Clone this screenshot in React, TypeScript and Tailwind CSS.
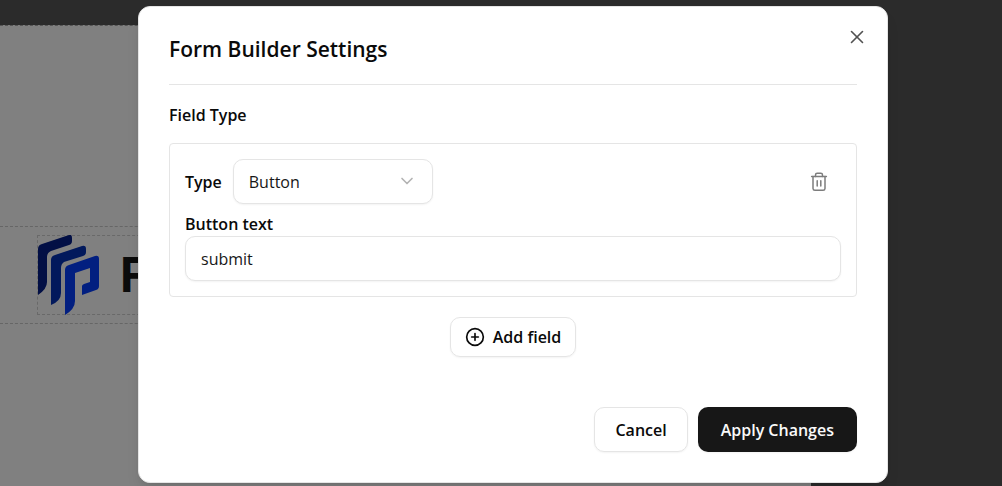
import { useState } from 'react';
import { ChevronDown, CirclePlus, X } from 'lucide-react';

function Logo() {
  return (
    <svg viewBox="0 0 62 82" className="mt-px h-[82px] w-[62px] shrink-0" aria-hidden="true">
      <path fill="#020f45" d="M0 14Q0 10 4 9L31 0Q34 -1 34 3V6Q34 9 31 10L13 16Q9 18 9 22V47Q9 54 0 60Z" />
      <path fill="#02195c" d="M13 25Q13 21 17 20L44 11Q48 10 48 14V17Q48 20 45 21L26 27Q23 29 23 33V58Q23 66 13 70Z" />
      <path fill="#021f80" d="M27 35Q27 31 31 30L57 21Q61 20 61 24V51Q61 54 58 55L44 60V51Q44 50 46 49L52 47V33L37 38V66Q37 74 27 80Z" />
    </svg>
  );
}

function TrashIcon() {
  return (
    <svg
      width="20"
      height="20"
      viewBox="0 0 20 20"
      fill="none"
      stroke="currentColor"
      strokeWidth="1.5"
      strokeLinecap="round"
      strokeLinejoin="round"
      aria-hidden="true"
    >
      <path d="M2.6 4.5h14.8" />
      <path d="M6.5 4.5V3a1.7 1.7 0 0 1 1.7-1.7h3.6A1.7 1.7 0 0 1 13.5 3v1.5" />
      <path d="M4 4.5v12A1.9 1.9 0 0 0 5.9 18.3h8.2A1.9 1.9 0 0 0 16 16.5v-12" />
      <path d="M8.2 8.7v5.2M11.8 8.7v5.2" />
    </svg>
  );
}

function Canvas() {
  return (
    <div className="h-full pt-[25px] pr-[191px]" aria-hidden="true">
      <div className="h-full border-t border-dashed border-[#555555] bg-[#808080] pt-[200px]">
        <div className="overflow-hidden border-y border-dashed border-[#666666] py-2 pl-[37px]">
          <div className="flex h-20 items-center border border-dashed border-[#696969]">
            <Logo />
            <span className="pl-5 font-[Inter,sans-serif] text-5xl font-bold text-[#0b0b0b]">Form</span>
          </div>
        </div>
      </div>
    </div>
  );
}

const inputClass =
  'h-[45px] rounded-[10px] border border-[#e5e5e5] bg-white px-[15px] text-base text-[#171717] shadow-xs outline-none';

export default function App() {
  const [type, setType] = useState('Button');
  const [text, setText] = useState('submit');

  return (
    <div className="relative h-screen overflow-hidden bg-[#2b2b2b] font-['Open_Sans',sans-serif] text-[#0a0a0a]">
      <Canvas />
      <div className="absolute inset-0 flex items-start justify-center pt-[6px] pl-6">
        <div
          role="dialog"
          aria-labelledby="dialog-title"
          className="relative w-full max-w-[750px] rounded-xl border border-[#e5e5e5] bg-white p-[30px] shadow-lg"
        >
          <button type="button" aria-label="Close" className="absolute top-[19px] right-[19px] text-[#525252]">
            <X size={22} strokeWidth={1.75} />
          </button>

          <h2 id="dialog-title" className="border-b border-[#e5e5e5] pb-[22px] text-[21px] leading-[25px] font-semibold">
            Form Builder Settings
          </h2>

          <h3 className="pt-5 text-base leading-5 font-semibold">Field Type</h3>

          <div className="mt-[18px] rounded border border-[#e5e5e5] p-[15px]">
            <div className="flex items-center justify-between">
              <div className="flex items-center gap-[11px]">
                <label htmlFor="field-type" className="text-base font-semibold">
                  Type
                </label>
                <div className="relative">
                  <select
                    id="field-type"
                    value={type}
                    onChange={(e) => setType(e.target.value)}
                    className={`${inputClass} w-[200px] appearance-none`}
                  >
                    <option>Button</option>
                    <option>Text</option>
                    <option>Email</option>
                  </select>
                  <ChevronDown
                    size={20}
                    strokeWidth={2}
                    className="pointer-events-none absolute top-3 right-4 text-[#b3b3b3]"
                  />
                </div>
              </div>
              <button type="button" aria-label="Delete field" className="px-3 text-[#7d7d7d]">
                <TrashIcon />
              </button>
            </div>

            <label htmlFor="button-text" className="mt-2 block text-base leading-6 font-semibold">
              Button text
            </label>
            <input
              id="button-text"
              type="text"
              value={text}
              onChange={(e) => setText(e.target.value)}
              className={`${inputClass} block w-full`}
            />
          </div>

          <div className="mt-5 flex justify-center">
            <button
              type="button"
              className="flex h-10 items-center gap-2 rounded-[10px] border border-[#e5e5e5] px-[14px] text-base font-semibold shadow-xs"
            >
              <CirclePlus size={20} strokeWidth={2} />
              Add field
            </button>
          </div>

          <div className="mt-[50px] flex justify-end gap-[10px]">
            <button
              type="button"
              className="h-[45px] rounded-[10px] border border-[#e5e5e5] px-5 text-base font-semibold shadow-xs"
            >
              Cancel
            </button>
            <button
              type="button"
              className="h-[45px] rounded-[10px] bg-[#171717] px-[23px] text-base font-semibold text-[#fafafa] shadow-xs"
            >
              Apply Changes
            </button>
          </div>
        </div>
      </div>
    </div>
  );
}
